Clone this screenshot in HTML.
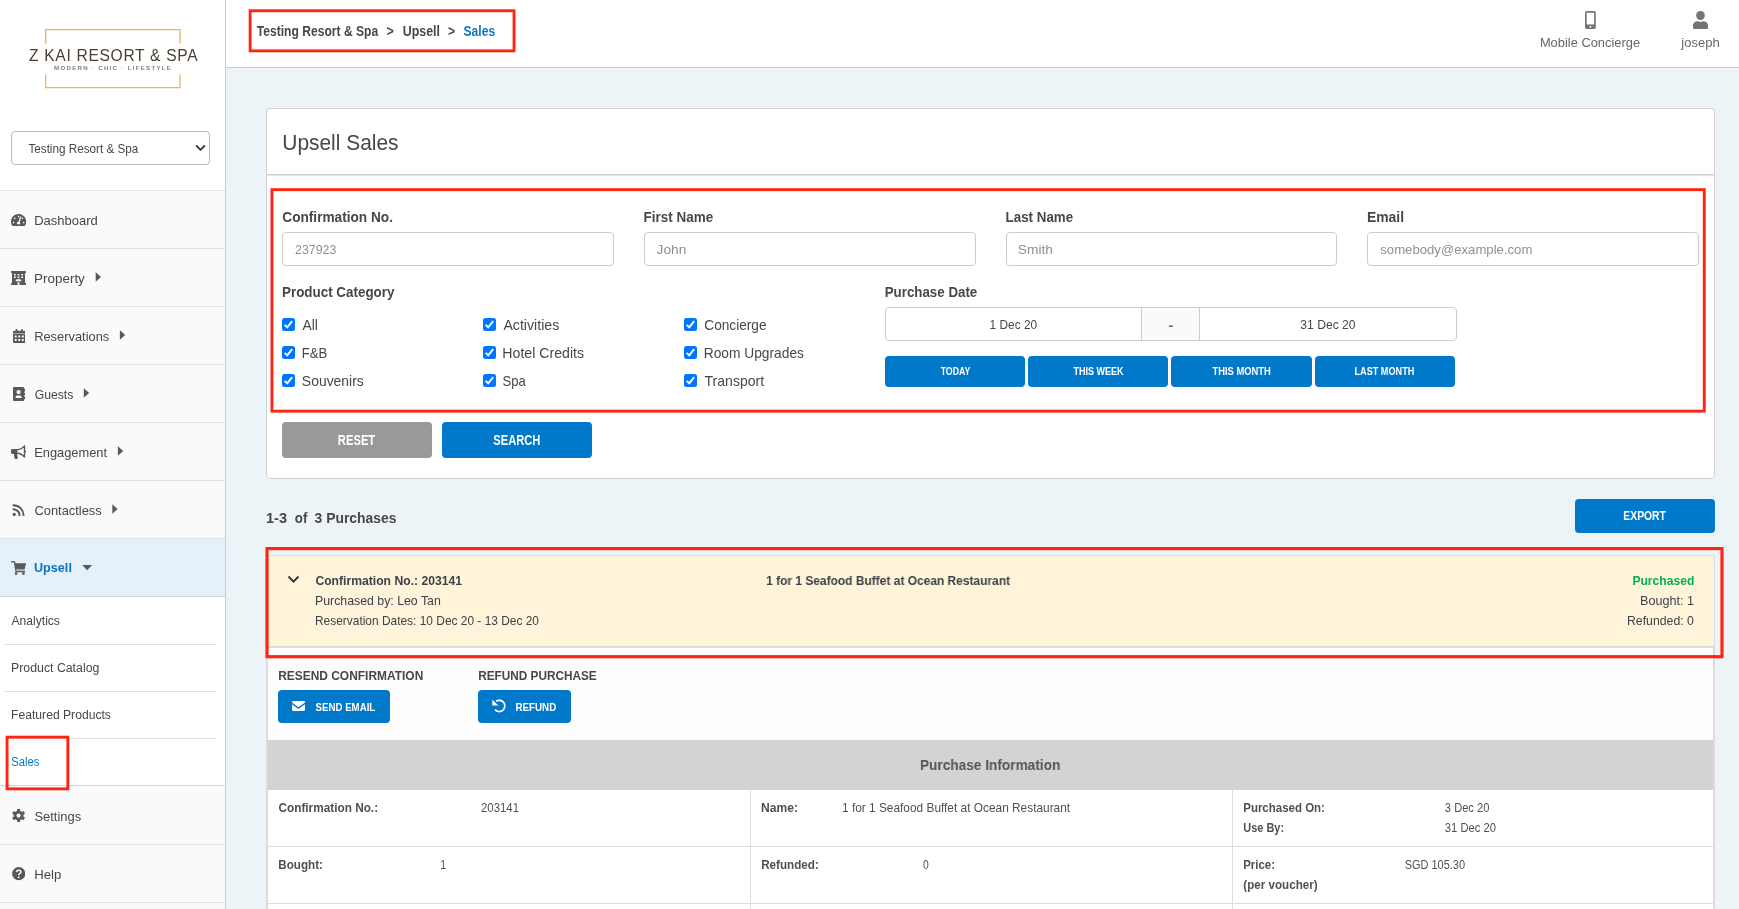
<!DOCTYPE html>
<html lang="en">
<head>
<meta charset="utf-8">
<title>Upsell Sales</title>
<style>
*{box-sizing:border-box;margin:0;padding:0}
html,body{width:1739px;height:909px;overflow:hidden;background:#edf4f8}
body{font-family:"Liberation Sans",sans-serif;font-size:13px;color:#474747;position:relative}
#wrap{position:absolute;left:0;top:0;width:1739px;height:909px;will-change:transform}
.a{position:absolute}
.t{position:absolute;display:inline-block;white-space:nowrap;line-height:20px;height:20px;transform-origin:0 0}
.b{font-weight:bold}
.blue{color:#0a74c4}
/* sidebar */
#side{left:0;top:0;width:226px;height:909px;background:#fff;border-right:1px solid #ccc}
#navbg{left:0;top:190px;width:225px;height:719px;background:#fafafa}
.sep{position:absolute;left:0;width:225px;height:1px;background:#e2e2e2}
.ssep{position:absolute;left:4px;width:213px;height:1px;background:#e2e2e2}
.nav{font-size:13.5px}
.sub{font-size:12.5px}
/* top bar */
#top{left:226px;top:0;width:1513px;height:68px;background:#fff;border-bottom:1px solid #ccc}
/* card */
#card{left:266px;top:108px;width:1449px;height:371px;background:#fff;border:1px solid #d1d1d1;border-radius:4px}
.inp{position:absolute;height:34px;border:1px solid #ccc;border-radius:4px;background:#fff}
.ph{color:#909090}
.lbl{font-size:14.4px;font-weight:bold}
.cb{position:absolute;width:13px;height:13px;background:#0075ff;border-radius:2.5px}
.cb svg{position:absolute;left:0;top:0}
.w{color:#fff}
.btn{position:absolute;background:#0179cb;border-radius:4px;color:#fff;font-weight:bold;text-align:center;white-space:nowrap}
</style>
<style id="cal">
#sel{left:28px!important;transform:matrix(0.8862,0,0,1,0.44,0)}
#n1{left:34px!important;transform:matrix(0.9636,0,0,1,0.15,0)}
#n2{left:34px!important;transform:matrix(0.9960,0,0,1,0.03,0)}
#n3{left:34px!important;transform:matrix(0.9531,0,0,1,0.17,0)}
#n4{left:34px!important;transform:matrix(0.9036,0,0,1,0.64,0)}
#n5{left:34px!important;transform:matrix(0.9516,0,0,1,0.18,0)}
#n6{left:34px!important;transform:matrix(0.9543,0,0,1,0.42,0)}
#n7{left:33px!important;transform:matrix(0.9360,0,0,1,0.97,0)}
#s1{left:11px!important;transform:matrix(0.9664,0,0,1,0.56,0)}
#s2{left:11px!important;transform:matrix(0.9853,0,0,1,0.01,0)}
#s3{left:11px!important;transform:matrix(0.9712,0,0,1,0.05,0)}
#s4{left:11px!important;transform:matrix(0.8962,0,0,1,0.31,0)}
#n8{left:34px!important;transform:matrix(0.9561,0,0,1,0.46,0)}
#n9{left:34px!important;transform:matrix(0.9720,0,0,1,0.27,0)}
#bc1{left:256px!important;transform:matrix(0.8405,0,0,1,0.76,0)}
#bc2{left:386px!important;transform:matrix(0.8721,0,0,1,0.55,0)}
#bc3{left:402px!important;transform:matrix(0.8609,0,0,1,0.83,0)}
#bc4{left:448px!important;transform:matrix(0.8371,0,0,1,0.05,0)}
#bc5{left:463px!important;transform:matrix(0.8412,0,0,1,0.49,0)}
#mc{left:1539px!important;transform:matrix(0.9764,0,0,1,0.88,0)}
#jo{left:1681px!important;transform:matrix(0.9880,0,0,1,0.34,0)}
#ttl{left:282px!important;transform:matrix(0.9214,0,0,1,0.31,0)}
#l1{left:282px!important;transform:matrix(0.9482,0,0,1,0.28,0)}
#l2{left:643px!important;transform:matrix(0.9350,0,0,1,0.59,0)}
#l3{left:1005px!important;transform:matrix(0.9270,0,0,1,0.61,0)}
#l4{left:1366px!important;transform:matrix(0.9654,0,0,1,0.95,0)}
#p1{left:295px!important;transform:matrix(0.9232,0,0,1,0.04,0)}
#p2{left:656px!important;transform:matrix(1.0239,0,0,1,0.60,0)}
#p3{left:1017px!important;transform:matrix(1.0247,0,0,1,0.83,0)}
#p4{left:1380px!important;transform:matrix(0.9809,0,0,1,0.30,0)}
#l5{left:281px!important;transform:matrix(0.9314,0,0,1,0.99,0)}
#l6{left:884px!important;transform:matrix(0.9251,0,0,1,0.74,0)}
#c00{left:302px!important;transform:matrix(0.9685,0,0,1,0.55,0)}
#c01{left:301px!important;transform:matrix(0.9139,0,0,1,0.81,0)}
#c02{left:301px!important;transform:matrix(0.9739,0,0,1,0.87,0)}
#c10{left:503px!important;transform:matrix(0.9914,0,0,1,0.38,0)}
#c11{left:502px!important;transform:matrix(0.9887,0,0,1,0.32,0)}
#c12{left:502px!important;transform:matrix(0.9117,0,0,1,0.47,0)}
#c20{left:704px!important;transform:matrix(0.9546,0,0,1,0.29,0)}
#c21{left:703px!important;transform:matrix(0.9620,0,0,1,0.77,0)}
#c22{left:704px!important;transform:matrix(0.9804,0,0,1,0.58,0)}
#d1{left:989px!important;transform:matrix(0.9011,0,0,1,0.60,0)}
#d2{left:1168px!important;transform:matrix(1.1886,0,0,1,0.35,0)}
#d3{left:1300px!important;transform:matrix(0.9190,0,0,1,0.30,0)}
#b1{left:940px!important;transform:matrix(0.7580,0,0,1,0.63,0)}
#b2{left:1073px!important;transform:matrix(0.7767,0,0,1,0.41,0)}
#b3{left:1212px!important;transform:matrix(0.8108,0,0,1,0.39,0)}
#b4{left:1354px!important;transform:matrix(0.7863,0,0,1,0.54,0)}
#b5{left:337px!important;transform:matrix(0.7777,0,0,1,0.87,0)}
#b6{left:493px!important;transform:matrix(0.7749,0,0,1,0.28,0)}
#r1{left:265px!important;transform:matrix(0.9672,0,0,1,0.91,0)}
#r2{left:294px!important;transform:matrix(0.8793,0,0,1,0.78,0)}
#r3{left:314px!important;transform:matrix(0.9203,0,0,1,0.60,0)}
#b7{left:1623px!important;transform:matrix(0.7779,0,0,1,0.37,0)}
#y1{left:315px!important;transform:matrix(0.9499,0,0,1,0.42,0)}
#y2{left:314px!important;transform:matrix(0.9624,0,0,1,0.98,0)}
#y3{left:314px!important;transform:matrix(0.9317,0,0,1,0.99,0)}
#y4{left:766px!important;transform:matrix(0.9347,0,0,1,0.10,0)}
#y5{left:1632px!important;transform:matrix(0.9468,0,0,1,0.38,0)}
#y6{left:1640px!important;transform:matrix(0.9851,0,0,1,0.07,0)}
#y7{left:1626px!important;transform:matrix(0.9600,0,0,1,0.97,0)}
#a1{left:278px!important;transform:matrix(0.9335,0,0,1,0.14,0)}
#a2{left:478px!important;transform:matrix(0.9215,0,0,1,0.15,0)}
#b8{left:315px!important;transform:matrix(0.8343,0,0,1,0.59,0)}
#b9{left:515px!important;transform:matrix(0.8465,0,0,1,0.39,0)}
#pi{left:919px!important;transform:matrix(0.9049,0,0,1,0.94,0)}
#t1{left:278px!important;transform:matrix(0.9215,0,0,1,0.49,0)}
#t2{left:481px!important;transform:matrix(0.8900,0,0,1,0.01,0)}
#t3{left:761px!important;transform:matrix(0.9429,0,0,1,0.11,0)}
#t4{left:841px!important;transform:matrix(0.9276,0,0,1,0.99,0)}
#t5{left:1243px!important;transform:matrix(0.8975,0,0,1,0.22,0)}
#t6{left:1444px!important;transform:matrix(0.8684,0,0,1,0.86,0)}
#t7{left:1243px!important;transform:matrix(0.8537,0,0,1,0.36,0)}
#t8{left:1444px!important;transform:matrix(0.8741,0,0,1,0.86,0)}
#t9{left:278px!important;transform:matrix(0.9111,0,0,1,0.33,0)}
#t10{left:440px!important;transform:matrix(0.8286,0,0,1,0.22,0)}
#t11{left:761px!important;transform:matrix(0.9104,0,0,1,0.19,0)}
#t12{left:923px!important;transform:matrix(0.8103,0,0,1,0.03,0)}
#t13{left:1243px!important;transform:matrix(0.8926,0,0,1,0.22,0)}
#t14{left:1404px!important;transform:matrix(0.8575,0,0,1,0.64,0)}
#t15{left:1243px!important;transform:matrix(0.9084,0,0,1,0.33,0)}
</style>
</head>
<body>
<div id="wrap">
<!-- SIDEBAR -->
<div id="side" class="a"></div>
<div id="navbg" class="a"></div>
<!-- logo -->
<svg class="a" style="left:20px;top:20px;overflow:visible" width="190" height="80" viewBox="20 20 190 80">
<path d="M45.7 43.5V29.7H180V43.5M45.7 74.5V87.6H180V74.5" fill="none" stroke="#e9b260" stroke-width="1.3"/>
<text id="lg1" transform="translate(113.3,61) scale(0.780)" x="0" y="0" text-anchor="middle" font-family="Liberation Sans, sans-serif" font-size="20" textLength="216.3" lengthAdjust="spacing" fill="#4a3f33">Z KAI RESORT &amp; SPA</text>
<text id="lg2" x="112.5" y="70.1" text-anchor="middle" font-family="Liberation Sans, sans-serif" font-size="6.1" font-weight="bold" textLength="116.8" lengthAdjust="spacing" fill="#857c72">MODERN <tspan fill="#e9b260">·</tspan> CHIC <tspan fill="#e9b260">·</tspan> LIFESTYLE</text>
</svg>
<!-- select -->
<div class="a" style="left:11px;top:131px;width:199px;height:34px;border:1px solid #bbb;border-radius:4px;background:#fff"></div>
<span class="t" id="sel" style="left:28px;top:139px;font-size:13.2px">Testing Resort &amp; Spa</span>
<svg class="a" style="left:195px;top:144px" width="11" height="8" viewBox="0 0 11 8"><path d="M1.2 1.5L5.5 5.8L9.8 1.5" fill="none" stroke="#333" stroke-width="1.8"/></svg>
<!-- nav -->
<div class="sep" style="top:190px"></div>
<div class="sep" style="top:248px"></div>
<div class="sep" style="top:306px"></div>
<div class="sep" style="top:364px"></div>
<div class="sep" style="top:422px"></div>
<div class="sep" style="top:480px"></div>
<div class="sep" style="top:538px"></div>
<div class="a" style="left:0;top:539px;width:225px;height:58px;background:#e4f0fa;border-bottom:1px solid #d4d6d8"></div>
<div class="a" style="left:0;top:597px;width:225px;height:188px;background:#fff"></div>
<div class="ssep" style="top:644px"></div>
<div class="ssep" style="top:691px"></div>
<div class="ssep" style="top:738px"></div>
<div class="sep" style="top:785px;background:#d6d6d6"></div>
<div class="sep" style="top:844px"></div>
<div class="sep" style="top:902px"></div>
<!-- nav icons -->
<svg class="a" style="left:11px;top:214px" width="15.2" height="12" viewBox="0 32 576 448" fill="#595959"><path d="M288 32C128.94 32 0 160.94 0 320c0 52.8 14.25 102.26 39.06 144.8 5.61 9.62 16.3 15.2 27.44 15.2h443c11.14 0 21.83-5.58 27.44-15.2C561.75 422.26 576 372.8 576 320c0-159.06-128.94-288-288-288zm0 64c14.71 0 26.58 10.13 30.32 23.65-1.11 2.26-2.64 4.23-3.45 6.67l-9.22 27.67c-5.13 3.49-10.97 6.01-17.64 6.01-17.67 0-32-14.33-32-32S270.33 96 288 96zM96 384c-17.67 0-32-14.33-32-32s14.33-32 32-32 32 14.33 32 32-14.33 32-32 32zm48-160c-17.67 0-32-14.33-32-32s14.33-32 32-32 32 14.33 32 32-14.33 32-32 32zm246.77-72.41l-61.33 184C343.13 347.33 352 364.54 352 384c0 11.72-3.38 22.55-8.88 32H232.88c-5.5-9.45-8.88-20.28-8.88-32 0-33.94 26.5-61.43 59.9-63.59l61.34-184.01c4.17-12.56 17.73-19.45 30.36-15.17 12.57 4.19 19.35 17.79 15.17 30.36zm14.66 57.2l15.52-46.55c3.47-1.29 7.13-2.23 11.05-2.23 17.67 0 32 14.33 32 32s-14.33 32-32 32c-11.38-.01-20.89-6.28-26.57-15.22zM480 384c-17.67 0-32-14.33-32-32s14.33-32 32-32 32 14.33 32 32-14.33 32-32 32z"/></svg>
<svg class="a" style="left:11px;top:271px" width="15" height="14" viewBox="0 0 15 14"><path fill="#595959" d="M.5 0H14.5Q15 0 15 .5V1.4Q15 1.9 14.5 1.9H14V12.1H14.5Q15 12.1 15 12.6V13.5Q15 14 14.5 14H8.4V11.2H6.6V14H.5Q0 14 0 13.5V12.6Q0 12.1 .5 12.1H1V1.9H.5Q0 1.9 0 1.4V.5Q0 0 .5 0Z"/><g fill="#fafafa"><rect x="2.9" y="3.1" width="1.9" height="1.5" rx=".3"/><rect x="6.55" y="3.1" width="1.9" height="1.5" rx=".3"/><rect x="10.2" y="3.1" width="1.9" height="1.5" rx=".3"/><rect x="2.9" y="5.6" width="1.9" height="1.5" rx=".3"/><rect x="6.55" y="5.6" width="1.9" height="1.5" rx=".3"/><rect x="10.2" y="5.6" width="1.9" height="1.5" rx=".3"/><path d="M4.6 10.3A2.9 2.2 0 0 1 10.4 10.3Z"/></g></svg>
<svg class="a" style="left:12.7px;top:329px" width="12.5" height="14" viewBox="0 0 12.5 14"><g fill="#595959"><rect x="2.7" y="0" width="1.7" height="2.6" rx=".4"/><rect x="8.1" y="0" width="1.7" height="2.6" rx=".4"/><path d="M1.3 1.7H11.2Q12.5 1.7 12.5 3V4.2H0V3Q0 1.7 1.3 1.7Z"/><path d="M0 5H12.5V12.7Q12.5 14 11.2 14H1.3Q0 14 0 12.7Z"/></g><rect x="0" y="4.2" width="12.5" height=".8" fill="#9a9a9a"/><g fill="#fafafa"><rect x="1.7" y="6.4" width="2" height="2" rx=".3"/><rect x="5.25" y="6.4" width="2" height="2" rx=".3"/><rect x="8.8" y="6.4" width="2" height="2" rx=".3"/><rect x="1.7" y="9.9" width="2" height="2" rx=".3"/><rect x="5.25" y="9.9" width="2" height="2" rx=".3"/><rect x="8.8" y="9.9" width="2" height="2" rx=".3"/></g></svg>
<svg class="a" style="left:12.7px;top:387px" width="12.8" height="14" viewBox="0 0 12.8 14"><g fill="#595959"><rect x="0" y="0" width="11.2" height="14" rx="1.3"/><rect x="10.6" y="2.1" width="2" height="2.4" rx=".5"/><rect x="10.6" y="5.8" width="2" height="2.4" rx=".5"/><rect x="10.6" y="9.5" width="2" height="2.4" rx=".5"/></g><g fill="#fafafa"><circle cx="5.6" cy="5.1" r="2.1"/><path d="M2.6 10.9V10.2Q2.6 8.5 4.3 8.5H6.9Q8.6 8.5 8.6 10.2V10.9Z"/></g></svg>
<svg class="a" style="left:11px;top:445px" width="15.2" height="14" viewBox="0 0 15.2 14"><g fill="#595959"><path d="M1.3 4H6.4V8.9H1.3Q0 8.9 0 7.6V5.3Q0 4 1.3 4Z"/><path d="M3 8.6H6.3Q6 11 7 12.8Q6.6 14 5.4 14H4.6Q3.8 14 3.6 13.2Q3 11 3 8.6Z"/><circle cx="14.3" cy="6.4" r=".9"/></g><path d="M6.2 4.7C9.2 4.7 11.6 3.2 13.5 .9V12.1C11.6 9.8 9.2 8.2 6.2 8.2" fill="none" stroke="#595959" stroke-width="1.4" stroke-linejoin="round"/></svg>
<svg class="a" style="left:12px;top:504px" width="13" height="12.4" viewBox="0 0 13 12.4" fill="none" stroke="#595959" stroke-width="1.9" stroke-linecap="round"><path d="M1.3 1.2A10.3 10.3 0 0 1 11.6 11.4"/><path d="M1.3 5.2A6.3 6.3 0 0 1 7.6 11.4"/><circle cx="2.2" cy="10.4" r="1.6" fill="#595959" stroke="none"/></svg>
<svg class="a" style="left:11px;top:561px" width="15.4" height="14" viewBox="0 0 15.4 14"><path d="M.7 .8H2.9Q3.5 .8 3.6 1.4L5 10.5H13.5" fill="none" stroke="#595959" stroke-width="1.4" stroke-linecap="round" stroke-linejoin="round"/><path d="M3.8 2.3H15.1L13.7 7.9H4.7Z" fill="#595959"/><rect x="4.7" y="7.9" width="9" height="1.5" fill="#9aa4ad"/><circle cx="5.1" cy="12.6" r="1.4" fill="#595959"/><circle cx="12.4" cy="12.6" r="1.4" fill="#595959"/></svg>
<svg class="a" style="left:11.8px;top:809.3px" width="13.2" height="13.2" viewBox="-6.6 -6.6 13.2 13.2"><g fill="#595959"><circle r="4.9"/><rect x="-1.5" y="-6.6" width="3" height="13.2" rx=".6"/><rect x="-1.5" y="-6.6" width="3" height="13.2" rx=".6" transform="rotate(60)"/><rect x="-1.5" y="-6.6" width="3" height="13.2" rx=".6" transform="rotate(120)"/></g><circle r="2.1" fill="#fafafa"/></svg>
<svg class="a" style="left:11.8px;top:867.3px" width="13.4" height="13.4" viewBox="0 0 13.4 13.4"><circle cx="6.7" cy="6.7" r="6.6" fill="#595959"/><path d="M4.5 5.1Q4.6 3.2 6.7 3.2Q8.9 3.2 8.9 5Q8.9 6.1 7.7 6.7Q6.7 7.2 6.7 8.3" fill="none" stroke="#fafafa" stroke-width="1.5"/><circle cx="6.7" cy="10.3" r=".95" fill="#fafafa"/></svg>
<svg class="a" style="left:0;top:0;pointer-events:none" width="226" height="909" viewBox="0 0 226 909" fill="#595959"><g transform="translate(0.7,0)"><path d="M95 272.2V281.8L100.3 277Z"/><path d="M119.2 330.2V339.8L124.5 335Z"/><path d="M83.1 388.2V397.8L88.4 393Z"/><path d="M117.2 446.2V455.8L122.5 451Z"/><path d="M111.6 504.2V513.8L116.9 509Z"/></g><path d="M82.2 565H92.1L87.15 570.3Z"/></svg>
<span class="t nav" id="n1" style="left:34px;top:211px">Dashboard</span>
<span class="t nav" id="n2" style="left:34px;top:269px">Property</span>
<span class="t nav" id="n3" style="left:34px;top:327px">Reservations</span>
<span class="t nav" id="n4" style="left:34px;top:385px">Guests</span>
<span class="t nav" id="n5" style="left:34px;top:443px">Engagement</span>
<span class="t nav" id="n6" style="left:34px;top:501px">Contactless</span>
<span class="t nav b blue" id="n7" style="left:34px;top:558px">Upsell</span>
<span class="t sub" id="s1" style="left:11px;top:611px">Analytics</span>
<span class="t sub" id="s2" style="left:11px;top:658px">Product Catalog</span>
<span class="t sub" id="s3" style="left:11px;top:705px">Featured Products</span>
<span class="t sub blue" id="s4" style="left:11px;top:752px">Sales</span>
<span class="t nav" id="n8" style="left:34px;top:807px">Settings</span>
<span class="t nav" id="n9" style="left:34px;top:865px">Help</span>
<!-- TOP BAR -->
<div id="top" class="a"></div>
<span class="t b" id="bc1" style="left:256px;top:21px;font-size:14.4px">Testing Resort &amp; Spa</span>
<span class="t b" id="bc2" style="left:386px;top:21px;font-size:14.4px">&gt;</span>
<span class="t b" id="bc3" style="left:403px;top:21px;font-size:14.4px">Upsell</span>
<span class="t b" id="bc4" style="left:448px;top:21px;font-size:14.4px">&gt;</span>
<span class="t b blue" id="bc5" style="left:463px;top:21px;font-size:14.4px">Sales</span>
<svg class="a" style="left:1585.2px;top:11px" width="10.8" height="18" viewBox="0 0 10.8 18"><rect x="0" y="0" width="10.8" height="18" rx="1.7" fill="#747474"/><rect x="1.65" y="1.75" width="7.5" height="11.7" fill="#fff"/><circle cx="5.4" cy="15.8" r=".95" fill="#fff"/></svg>
<span class="t" id="mc" style="left:1540px;top:33px;font-size:13.2px;color:#666">Mobile Concierge</span>
<svg class="a" style="left:1693px;top:10.9px" width="15" height="18" viewBox="0 0 15 18" fill="#747474"><ellipse cx="7.5" cy="4.5" rx="4.35" ry="4.5"/><path d="M0 17V14.6C0 12 2 10.3 4.4 10.3H5C6.6 11 8.4 11 10 10.3H10.6C13 10.3 15 12 15 14.6V17Q15 18 14 18H1Q0 18 0 17Z"/></svg>
<span class="t" id="jo" style="left:1680px;top:33px;font-size:13.2px;color:#666">joseph</span>
<!-- CARD -->
<div id="card" class="a"></div>
<span class="t" id="ttl" style="left:282px;top:127px;font-size:22.7px;line-height:30px;height:30px">Upsell Sales</span>
<div class="a" style="left:267px;top:174px;width:1447px;height:2px;background:linear-gradient(#cdcdcd 50%,#e6e6e6 50%)"></div>
<span class="t lbl" id="l1" style="left:282px;top:207px">Confirmation No.</span>
<span class="t lbl" id="l2" style="left:644px;top:207px">First Name</span>
<span class="t lbl" id="l3" style="left:1006px;top:207px">Last Name</span>
<span class="t lbl" id="l4" style="left:1367px;top:207px">Email</span>
<div class="inp" style="left:282px;top:232px;width:332px"></div>
<div class="inp" style="left:644px;top:232px;width:332px"></div>
<div class="inp" style="left:1006px;top:232px;width:331px"></div>
<div class="inp" style="left:1367px;top:232px;width:332px"></div>
<span class="t ph" id="p1" style="left:295px;top:240px;font-size:13.4px">237923</span>
<span class="t ph" id="p2" style="left:657px;top:240px;font-size:13.4px">John</span>
<span class="t ph" id="p3" style="left:1018px;top:240px;font-size:13.4px">Smith</span>
<span class="t ph" id="p4" style="left:1380px;top:240px;font-size:13.4px">somebody@example.com</span>
<span class="t lbl" id="l5" style="left:282px;top:282px">Product Category</span>
<span class="t lbl" id="l6" style="left:885px;top:282px">Purchase Date</span>
<div class="cb" style="left:282px;top:318px"><svg width="13" height="13" viewBox="0 0 13 13"><path d="M2.6 6.9L5.2 9.3L10.2 3.2" fill="none" stroke="#fff" stroke-width="1.9"/></svg></div>
<span class="t" id="c00" style="left:302px;top:315px;font-size:14.3px">All</span>
<div class="cb" style="left:282px;top:346px"><svg width="13" height="13" viewBox="0 0 13 13"><path d="M2.6 6.9L5.2 9.3L10.2 3.2" fill="none" stroke="#fff" stroke-width="1.9"/></svg></div>
<span class="t" id="c01" style="left:302px;top:343px;font-size:14.3px">F&amp;B</span>
<div class="cb" style="left:282px;top:374px"><svg width="13" height="13" viewBox="0 0 13 13"><path d="M2.6 6.9L5.2 9.3L10.2 3.2" fill="none" stroke="#fff" stroke-width="1.9"/></svg></div>
<span class="t" id="c02" style="left:302px;top:371px;font-size:14.3px">Souvenirs</span>
<div class="cb" style="left:483px;top:318px"><svg width="13" height="13" viewBox="0 0 13 13"><path d="M2.6 6.9L5.2 9.3L10.2 3.2" fill="none" stroke="#fff" stroke-width="1.9"/></svg></div>
<span class="t" id="c10" style="left:503px;top:315px;font-size:14.3px">Activities</span>
<div class="cb" style="left:483px;top:346px"><svg width="13" height="13" viewBox="0 0 13 13"><path d="M2.6 6.9L5.2 9.3L10.2 3.2" fill="none" stroke="#fff" stroke-width="1.9"/></svg></div>
<span class="t" id="c11" style="left:503px;top:343px;font-size:14.3px">Hotel Credits</span>
<div class="cb" style="left:483px;top:374px"><svg width="13" height="13" viewBox="0 0 13 13"><path d="M2.6 6.9L5.2 9.3L10.2 3.2" fill="none" stroke="#fff" stroke-width="1.9"/></svg></div>
<span class="t" id="c12" style="left:503px;top:371px;font-size:14.3px">Spa</span>
<div class="cb" style="left:684px;top:318px"><svg width="13" height="13" viewBox="0 0 13 13"><path d="M2.6 6.9L5.2 9.3L10.2 3.2" fill="none" stroke="#fff" stroke-width="1.9"/></svg></div>
<span class="t" id="c20" style="left:704px;top:315px;font-size:14.3px">Concierge</span>
<div class="cb" style="left:684px;top:346px"><svg width="13" height="13" viewBox="0 0 13 13"><path d="M2.6 6.9L5.2 9.3L10.2 3.2" fill="none" stroke="#fff" stroke-width="1.9"/></svg></div>
<span class="t" id="c21" style="left:704px;top:343px;font-size:14.3px">Room Upgrades</span>
<div class="cb" style="left:684px;top:374px"><svg width="13" height="13" viewBox="0 0 13 13"><path d="M2.6 6.9L5.2 9.3L10.2 3.2" fill="none" stroke="#fff" stroke-width="1.9"/></svg></div>
<span class="t" id="c22" style="left:704px;top:371px;font-size:14.3px">Transport</span>
<div class="a" style="left:885px;top:307px;width:572px;height:34px;border:1px solid #ccc;border-radius:4px;background:#fff"></div>
<div class="a" style="left:1141px;top:308px;width:59px;height:32px;border-left:1px solid #ccc;border-right:1px solid #ccc;background:#fafafa"></div>
<span class="t" id="d1" style="left:990px;top:315px;font-size:13.2px">1 Dec 20</span>
<span class="t b" id="d2" style="left:1168px;top:316px;font-size:13.2px;color:#666">-</span>
<span class="t" id="d3" style="left:1300px;top:315px;font-size:13.2px">31 Dec 20</span>
<div class="btn" style="left:885px;top:356px;width:140px;height:31px"></div>
<div class="btn" style="left:1028px;top:356px;width:140px;height:31px"></div>
<div class="btn" style="left:1171px;top:356px;width:141px;height:31px"></div>
<div class="btn" style="left:1315px;top:356px;width:140px;height:31px"></div>
<span class="t b w" id="b1" style="left:940px;top:361px;font-size:11.6px">TODAY</span>
<span class="t b w" id="b2" style="left:1073px;top:361px;font-size:11.6px">THIS WEEK</span>
<span class="t b w" id="b3" style="left:1212px;top:361px;font-size:11.6px">THIS MONTH</span>
<span class="t b w" id="b4" style="left:1354px;top:361px;font-size:11.6px">LAST MONTH</span>
<div class="btn" style="left:282px;top:422px;width:150px;height:36px;background:#999"></div>
<div class="btn" style="left:442px;top:422px;width:150px;height:36px"></div>
<span class="t b w" id="b5" style="left:338px;top:430px;font-size:14.4px">RESET</span>
<span class="t b w" id="b6" style="left:493px;top:430px;font-size:14.4px">SEARCH</span>
<!-- RESULTS -->
<span class="t b" id="r1" style="left:266px;top:508px;font-size:15.1px">1-3</span>
<span class="t b" id="r2" style="left:294px;top:508px;font-size:15.1px">of</span>
<span class="t b" id="r3" style="left:314px;top:508px;font-size:15.1px">3 Purchases</span>
<div class="btn" style="left:1575px;top:499px;width:140px;height:34px;border-radius:4px"></div>
<span class="t b w" id="b7" style="left:1623px;top:506px;font-size:13.3px">EXPORT</span>
<!-- PANEL -->
<div class="a" style="left:266px;top:555px;width:1449px;height:93px;background:#fff4d9;border:1px solid #dbdbdb;border-bottom:2px solid #dcdcdc"></div>
<div class="a" style="left:266px;top:648px;width:1449px;height:270px;background:#fdfdfd;border-left:2px solid #dcdcdc;border-right:2px solid #dcdcdc"></div>
<svg class="a" style="left:287px;top:575px" width="13" height="9" viewBox="0 0 13 9"><path d="M1.5 1.5L6.5 6.6L11.5 1.5" fill="none" stroke="#333" stroke-width="1.9"/></svg>
<span class="t b" id="y1" style="left:315px;top:571px;font-size:12.8px;color:#3d4248">Confirmation No.: 203141</span>
<span class="t" id="y2" style="left:315px;top:591px;font-size:12.8px;color:#3d4248">Purchased by: Leo Tan</span>
<span class="t" id="y3" style="left:315px;top:611px;font-size:12.8px;color:#3d4248">Reservation Dates: 10 Dec 20 - 13 Dec 20</span>
<span class="t b" id="y4" style="left:766px;top:571px;font-size:12.8px;color:#3d4248">1 for 1 Seafood Buffet at Ocean Restaurant</span>
<span class="t b" id="y5" style="left:1632px;top:571px;font-size:12.8px;color:#05b04d">Purchased</span>
<span class="t" id="y6" style="left:1640px;top:591px;font-size:12.8px;color:#3d4248">Bought: 1</span>
<span class="t" id="y7" style="left:1627px;top:611px;font-size:12.8px;color:#3d4248">Refunded: 0</span>
<span class="t b" id="a1" style="left:278px;top:666px;font-size:12.8px">RESEND CONFIRMATION</span>
<span class="t b" id="a2" style="left:478px;top:666px;font-size:12.8px">REFUND PURCHASE</span>
<div class="btn" style="left:278px;top:690px;width:112px;height:33px;border-radius:4px"></div>
<div class="btn" style="left:478px;top:690px;width:93px;height:33px;border-radius:4px"></div>
<svg class="a" style="left:292px;top:701px" width="13" height="10" viewBox="0 0 13 10"><path d="M0 1.2C0 .5.5 0 1.2 0H11.8C12.5 0 13 .5 13 1.2V1.6L6.5 6.3L0 1.6ZM0 3.2L6.5 7.9L13 3.2V8.8C13 9.5 12.5 10 11.8 10H1.2C.5 10 0 9.5 0 8.8Z" fill="#fff"/></svg>
<span class="t b w" id="b8" style="left:315px;top:697px;font-size:11.6px">SEND EMAIL</span>
<svg class="a" style="left:491.5px;top:698.5px" width="14" height="14" viewBox="0 0 14 14"><path d="M4.1 2.3A5.6 5.6 0 1 1 3 10.6" fill="none" stroke="#fff" stroke-width="1.7"/><path d="M.3 .6V6.6H6.5Q3.6 4.3 .3 .6Z" fill="#fff"/></svg>
<span class="t b w" id="b9" style="left:515px;top:697px;font-size:11.6px">REFUND</span>
<div class="a" style="left:268px;top:740px;width:1445px;height:49.5px;background:#d3d3d3"></div>
<span class="t b" id="pi" style="left:920px;top:755px;font-size:15.1px;color:#555">Purchase Information</span>
<div class="a" style="left:268px;top:789.5px;width:1445px;height:120px;background:#fff"></div>
<div class="a" style="left:750px;top:789.5px;width:1px;height:120px;background:#ddd"></div>
<div class="a" style="left:1232px;top:789.5px;width:1px;height:120px;background:#ddd"></div>
<div class="a" style="left:268px;top:846px;width:1445px;height:1px;background:#ddd"></div>
<div class="a" style="left:268px;top:903px;width:1445px;height:1px;background:#ddd"></div>
<span class="t b" id="t1" style="left:278px;top:798px;font-size:12.8px;color:#505050">Confirmation No.:</span>
<span class="t" id="t2" style="left:481px;top:798px;font-size:12.8px;color:#505050">203141</span>
<span class="t b" id="t3" style="left:761px;top:798px;font-size:12.8px;color:#505050">Name:</span>
<span class="t" id="t4" style="left:842px;top:798px;font-size:12.8px;color:#505050">1 for 1 Seafood Buffet at Ocean Restaurant</span>
<span class="t b" id="t5" style="left:1243px;top:798px;font-size:12.8px;color:#505050">Purchased On:</span>
<span class="t" id="t6" style="left:1445px;top:798px;font-size:12.8px;color:#505050">3 Dec 20</span>
<span class="t b" id="t7" style="left:1243px;top:818px;font-size:12.8px;color:#505050">Use By:</span>
<span class="t" id="t8" style="left:1445px;top:818px;font-size:12.8px;color:#505050">31 Dec 20</span>
<span class="t b" id="t9" style="left:278px;top:855px;font-size:12.8px;color:#505050">Bought:</span>
<span class="t" id="t10" style="left:440px;top:855px;font-size:12.8px;color:#505050">1</span>
<span class="t b" id="t11" style="left:761px;top:855px;font-size:12.8px;color:#505050">Refunded:</span>
<span class="t" id="t12" style="left:923px;top:855px;font-size:12.8px;color:#505050">0</span>
<span class="t b" id="t13" style="left:1243px;top:855px;font-size:12.8px;color:#505050">Price:</span>
<span class="t" id="t14" style="left:1405px;top:855px;font-size:12.8px;color:#505050">SGD 105.30</span>
<span class="t b" id="t15" style="left:1243px;top:875px;font-size:12.8px;color:#505050">(per voucher)</span>
<svg class="a" style="left:0;top:0;pointer-events:none" width="1739" height="909" viewBox="0 0 1739 909" fill="none" stroke="#ff2513">
<rect x="250.15" y="10.75" width="263.90" height="40.10" stroke-width="2.90"/>
<rect x="271.95" y="189.65" width="1432.30" height="221.50" stroke-width="2.90"/>
<rect x="267.00" y="548.60" width="1455.00" height="108.10" stroke-width="3.20"/>
<rect x="7.05" y="737.15" width="60.80" height="51.70" stroke-width="2.90"/>
</svg>
</div>
</body>
</html>
